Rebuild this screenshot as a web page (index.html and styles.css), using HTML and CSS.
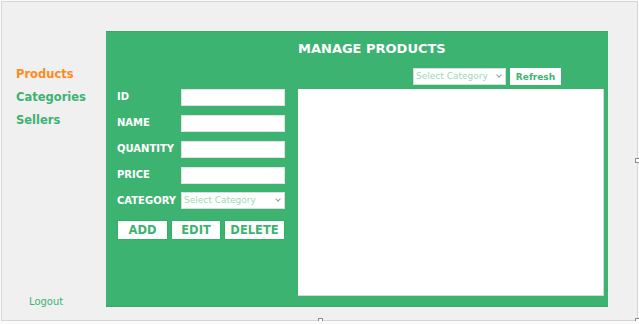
FILE: index.html
```html
<!DOCTYPE html>
<html lang="en">

<head>
    <meta charset="UTF-8">
    <meta name="viewport" content="width=device-width, initial-scale=1.0">
    <title>Manage Products</title>
    <link rel="stylesheet" href="styles.css">
</head>

<body>
    <div class="form">
        <!-- left menu -->
        <div class="sidebar">
            <div class="menu">
                <a class="menu-item active">Products</a>
                <a class="menu-item">Categories</a>
                <a class="menu-item">Sellers</a>
            </div>
            <a class="logout">Logout</a>
        </div>

        <!-- main green panel -->
        <div class="panel">
            <div class="title">MANAGE PRODUCTS</div>
            <div class="panel-body">
                <div class="fields">
                    <div class="row">
                        <label>ID</label>
                        <input type="text">
                    </div>
                    <div class="row">
                        <label>NAME</label>
                        <input type="text">
                    </div>
                    <div class="row">
                        <label>QUANTITY</label>
                        <input type="text">
                    </div>
                    <div class="row">
                        <label>PRICE</label>
                        <input type="text">
                    </div>
                    <div class="row row-select">
                        <label>CATEGORY</label>
                        <div class="select">Select Category<span class="chev"></span></div>
                    </div>
                    <div class="buttons">
                        <button class="btn btn-add">ADD</button>
                        <button class="btn btn-edit">EDIT</button>
                        <button class="btn btn-delete">DELETE</button>
                    </div>
                </div>
                <div class="list">
                    <div class="toolbar">
                        <div class="select select-top">Select Category<span class="chev"></span></div>
                        <button class="btn btn-refresh">Refresh</button>
                    </div>
                    <div class="grid"></div>
                </div>
            </div>
        </div>

        <!-- designer handles -->
        <span class="handle handle-bottom"></span>
        <span class="handle handle-corner"></span>
        <span class="handle handle-right"></span>
    </div>
</body>

</html>
```

FILE: styles.css
```css
html * {
    margin: 0;
    padding: 0;
    box-sizing: border-box;
}

body {
    background: #fbfbfb;
    font-family: "DejaVu Sans", sans-serif;
}

.form {
    position: relative;
    margin: 1px 1px 0 1px;
    height: 320px;
    border: 1px solid #d6d6d6;
    background: #f0f0f0;
    display: flex;
}

/* 左侧菜单 */
.sidebar {
    width: 104px;
    display: flex;
    flex-direction: column;
    justify-content: space-between;
    padding: 61px 0 13px 14px;
}

.menu {
    display: flex;
    flex-direction: column;
}

.menu-item {
    font-size: 11.5px;
    font-weight: bold;
    line-height: 23px;
    color: #3cb371;
}

.menu-item.active {
    color: #ff8a1c;
}

.logout {
    padding-left: 13px;
    font-size: 10px;
    color: #3cb371;
}

/* 绿色面板 */
.panel {
    margin-top: 29px;
    width: 502px;
    height: 276px;
    background: #3cb371;
    border-top: 1px dotted #2aa562;
    border-bottom: 1px dotted #2aa562;
}

.title {
    height: 36px;
    padding: 8px 0 0 192px;
    font-size: 13px;
    line-height: 18px;
    font-weight: bold;
    color: #fff;
}

.panel-body {
    display: flex;
    padding-left: 11px;
}

.fields {
    width: 168px;
    padding-top: 21px;
}

.row {
    display: flex;
    align-items: center;
    height: 17px;
    margin-bottom: 9px;
}

.row label {
    width: 64px;
    margin-top: -3px;
    font-size: 10px;
    font-weight: bold;
    color: #fff;
}

.row input {
    width: 104px;
    height: 17px;
    border: 1px solid #e3e3e3;
    background: #fff;
}

.row-select {
    margin-top: -1px;
}

.row-select label {
    margin-top: 0;
}

.select {
    position: relative;
    width: 104px;
    height: 17px;
    border: 1px solid #dcdcdc;
    background: #fff;
    font-size: 9px;
    line-height: 15px;
    padding-left: 2px;
    color: #9adbb5;
}

.chev {
    position: absolute;
    right: 4px;
    top: 4px;
    width: 4px;
    height: 4px;
    border-right: 1px solid #9a9a9a;
    border-bottom: 1px solid #9a9a9a;
    transform: rotate(45deg);
}

.buttons {
    display: flex;
    gap: 3px;
    margin-top: 11px;
}

.btn {
    height: 20px;
    border: 1px solid #2fb267;
    background: #fff;
    color: #3cb371;
    font-family: "DejaVu Sans", sans-serif;
    font-size: 11.5px;
    font-weight: bold;
}

.btn-add {
    width: 51px;
}

.btn-edit {
    width: 50px;
}

.btn-delete {
    width: 61px;
}

/* 右侧列表 */
.list {
    margin-left: 13px;
    width: 306px;
}

.toolbar {
    display: flex;
    justify-content: flex-end;
    gap: 4px;
    padding-right: 43px;
    margin-bottom: 4px;
}

.select-top {
    width: 93px;
}

.btn-refresh {
    width: 51px;
    height: 17px;
    font-size: 9px;
    border-color: #fff;
}

.grid {
    height: 207px;
    background: #fff;
    border-right: 1px solid #d8d8d8;
    border-bottom: 1px solid #d8d8d8;
}

/* 设计器手柄 */
.handle {
    position: absolute;
    width: 5px;
    height: 5px;
    border: 1px solid #8c8c8c;
    background: #fff;
}

.handle-bottom {
    left: 316px;
    bottom: -3px;
}

.handle-corner {
    right: -3px;
    bottom: -3px;
}

.handle-right {
    right: -3px;
    top: 156px;
}
```
